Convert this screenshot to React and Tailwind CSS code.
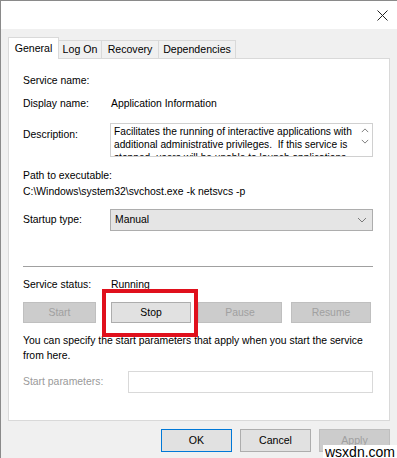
import React from 'react';

const FONT = { fontFamily: '"Liberation Sans", Arial, sans-serif' };

function Chevron({ dir = 'down', className = '' }) {
  const d = dir === 'down' ? 'M1 1 L5 5 L9 1' : 'M1 5 L5 1 L9 5';
  return (
    <svg width="10" height="6" viewBox="0 0 10 6" className={className}>
      <path d={d} fill="none" stroke="currentColor" strokeWidth="1" />
    </svg>
  );
}

function Tab({ label, active, width }) {
  if (active) {
    return (
      <div
        className="relative z-10 -mb-px flex h-[22px] items-center justify-center border border-b-0 border-[#d9d9d9] bg-white text-[10.6px] text-black"
        style={{ width }}
      >
        {label}
      </div>
    );
  }
  return (
    <div
      className="-ml-px mt-[3px] flex h-[18px] items-center justify-center border border-b-0 border-[#d9d9d9] bg-[#f0f0f0] text-[10.6px] text-black"
      style={{ width }}
    >
      {label}
    </div>
  );
}

function SvcButton({ label, enabled, width }) {
  return (
    <div
      className={
        'flex h-[21px] items-center justify-center border text-[10.4px] ' +
        (enabled
          ? 'border-[#adadad] bg-[#e1e1e1] text-black'
          : 'border-[#bfbfbf] bg-[#cccccc] text-[#a0a0a0]')
      }
      style={{ width }}
    >
      {label}
    </div>
  );
}

export default function App() {
  return (
    <div
      className="relative h-[458px] w-[397px] overflow-hidden border-l border-t border-[#8a8a8a] bg-[#f0f0f0]"
      style={FONT}
    >
      {/* title bar */}
      <div className="flex h-[28px] items-center justify-end bg-white pr-[9px]">
        <svg width="11" height="11" viewBox="0 0 11 11">
          <path d="M0.5 0.5 L10.5 10.5 M10.5 0.5 L0.5 10.5" stroke="#222" strokeWidth="1" />
        </svg>
      </div>

      <div className="flex h-[429px] w-[390px] flex-col pl-[7px] pr-[1px] pt-[8px]">
        {/* tabs */}
        <div className="flex items-start">
          <Tab label="General" active width={51} />
          <Tab label="Log On" width={44} />
          <Tab label="Recovery" width={58} />
          <Tab label="Dependencies" width={78} />
        </div>

        {/* tab panel */}
        <div className="flex h-[363px] flex-col border border-[#d9d9d9] bg-white pl-[14px] pr-[16px] text-[10.4px] text-black">
          <div className="mt-[15px] flex h-[14px] items-center">Service name:</div>

          <div className="mt-[9px] flex h-[14px] items-center">
            <div className="w-[88px]">Display name:</div>
            <div>Application Information</div>
          </div>

          <div className="mt-[12px] flex h-[34px]">
            <div className="w-[87px] pt-[4px]">Description:</div>
            <div className="flex flex-1 overflow-hidden border border-[#d0d0d0] bg-white">
              <div className="h-[32px] flex-1 overflow-hidden pl-[3px] pt-[1px] text-[10.2px] leading-[13px]">
                Facilitates the running of interactive applications with additional administrative
                privileges.&nbsp; If this service is stopped, users will be unable to launch
                applications with the additional administrative privileges they may require to
                perform desired user tasks.
              </div>
              <div className="flex w-[14px] flex-col items-center gap-[6px] pt-[4px] text-[#606060]">
                <Chevron dir="up" className="h-[5px] w-[8px]" />
                <Chevron dir="down" className="h-[5px] w-[8px]" />
              </div>
            </div>
          </div>

          <div className="mt-[12px] flex h-[14px] items-center">Path to executable:</div>
          <div className="mt-[2px] flex h-[14px] items-center">
            C:\Windows\system32\svchost.exe -k netsvcs -p
          </div>

          <div className="mt-[10px] flex h-[22px] items-center">
            <div className="w-[87px]">Startup type:</div>
            <div className="flex h-[22px] flex-1 items-center justify-between border border-[#adadad] bg-[#e5e5e5] pl-[4px] pr-[5px]">
              <span>Manual</span>
              <Chevron dir="down" className="text-[#7a7a7a]" />
            </div>
          </div>

          <div className="mt-[35px] h-px bg-[#a0a0a0]" />

          <div className="mt-[11px] flex h-[14px] items-center">
            <div className="w-[88px]">Service status:</div>
            <div>Running</div>
          </div>

          <div className="mt-[10px] flex items-center">
            <SvcButton label="Start" width={73} />
            <div className="ml-[15px]">
              <SvcButton label="Stop" enabled width={80} />
            </div>
            <div className="ml-[7px]">
              <SvcButton label="Pause" width={84} />
            </div>
            <div className="ml-[9px]">
              <SvcButton label="Resume" width={80} />
            </div>
          </div>

          <div className="mt-[10px] whitespace-nowrap leading-[15px]">
            You can specify the start parameters that apply when you start the service
            <br />
            from here.
          </div>

          <div className="mt-[8px] flex h-[22px] items-center">
            <div className="w-[105px] text-[#9a9a9a]">Start parameters:</div>
            <div className="h-[22px] flex-1 border border-[#d9d9d9] bg-white" />
          </div>
        </div>

        {/* dialog buttons */}
        <div className="mt-[8px] flex justify-end gap-[8px] text-[10.6px]">
          <div className="flex h-[23px] w-[71px] items-center justify-center border border-[#0078d7] bg-[#e1e1e1] text-black">
            OK
          </div>
          <div className="flex h-[23px] w-[71px] items-center justify-center border border-[#adadad] bg-[#e1e1e1] text-black">
            Cancel
          </div>
          <div className="flex h-[23px] w-[71px] items-center justify-center border border-[#bfbfbf] bg-[#cccccc] text-[#a0a0a0]">
            Apply
          </div>
        </div>
      </div>

      {/* annotation around Stop */}
      <div className="absolute left-[101px] top-[288px] h-[48px] w-[96px] border-[4px] border-[#e0101c]" />

      {/* watermark */}
      <div className="absolute left-[322px] top-[444px] bg-white px-[2px] text-[14px] leading-[14px] text-black">
        wsxdn.com
      </div>
    </div>
  );
}
